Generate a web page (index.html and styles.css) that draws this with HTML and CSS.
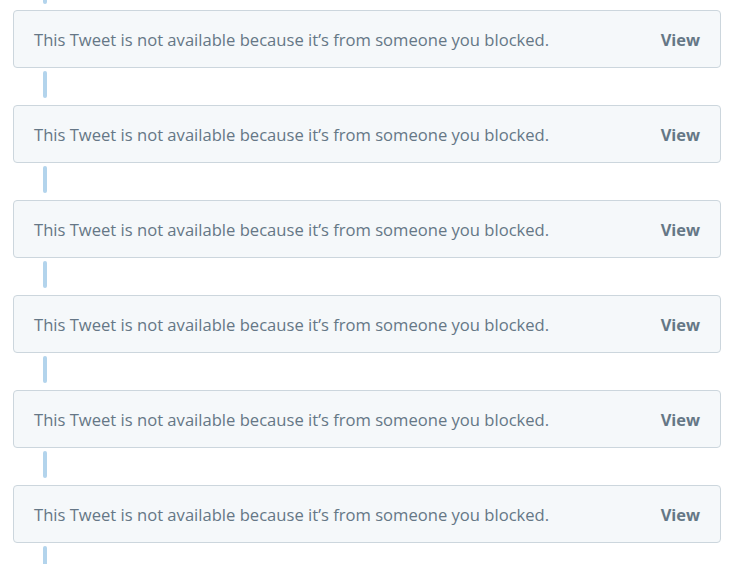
FILE: index.html
```html
<!DOCTYPE html>
<html lang="en">
<head>
    <meta charset="UTF-8">
    <meta name="viewport" content="width=device-width, initial-scale=1.0">
    <title>Conversation</title>
    <link rel="stylesheet" href="styles.css">
</head>
<body>
    <div class="thread">
        <div class="line line-top"></div>

        <div class="tombstone">
            <span class="tombstone-text">This Tweet is not available because it’s from someone you blocked.</span>
            <button class="tombstone-view">View</button>
        </div>
        <div class="line"></div>

        <div class="tombstone">
            <span class="tombstone-text">This Tweet is not available because it’s from someone you blocked.</span>
            <button class="tombstone-view">View</button>
        </div>
        <div class="line"></div>

        <div class="tombstone">
            <span class="tombstone-text">This Tweet is not available because it’s from someone you blocked.</span>
            <button class="tombstone-view">View</button>
        </div>
        <div class="line"></div>

        <div class="tombstone">
            <span class="tombstone-text">This Tweet is not available because it’s from someone you blocked.</span>
            <button class="tombstone-view">View</button>
        </div>
        <div class="line"></div>

        <div class="tombstone">
            <span class="tombstone-text">This Tweet is not available because it’s from someone you blocked.</span>
            <button class="tombstone-view">View</button>
        </div>
        <div class="line"></div>

        <div class="tombstone">
            <span class="tombstone-text">This Tweet is not available because it’s from someone you blocked.</span>
            <button class="tombstone-view">View</button>
        </div>
        <div class="line"></div>
    </div>
</body>
</html>
```

FILE: styles.css
```css
body {
    margin: 0;
    background: #fff;
    font-family: "Open Sans", "Noto Sans", sans-serif;
}
.thread {
    display: flex;
    flex-direction: column;
    padding: 0 22px 0 13px;
    overflow: hidden;
    height: 564px;
}
.line {
    width: 4px;
    height: 27px;
    margin: 3px 0 7px 30px;
    border-radius: 2px;
    background-color: #b3d4ec;
    flex-shrink: 0;
}
.line-top {
    height: 8px;
    margin: -4px 0 6px 30px;
}
.tombstone {
    display: flex;
    align-items: center;
    justify-content: space-between;
    height: 56px;
    flex-shrink: 0;
    padding: 0 20px 0 20px;
    background-color: #f5f8fa;
    border: 1px solid #ccd6dd;
    border-radius: 4px;
}
.tombstone-text {
    font-size: 16.6px;
    color: #657786;
}
.tombstone-view {
    padding: 0;
    border: none;
    background: none;
    font-family: inherit;
    font-size: 16.4px;
    font-weight: 700;
    color: #657786;
    cursor: pointer;
}
```
